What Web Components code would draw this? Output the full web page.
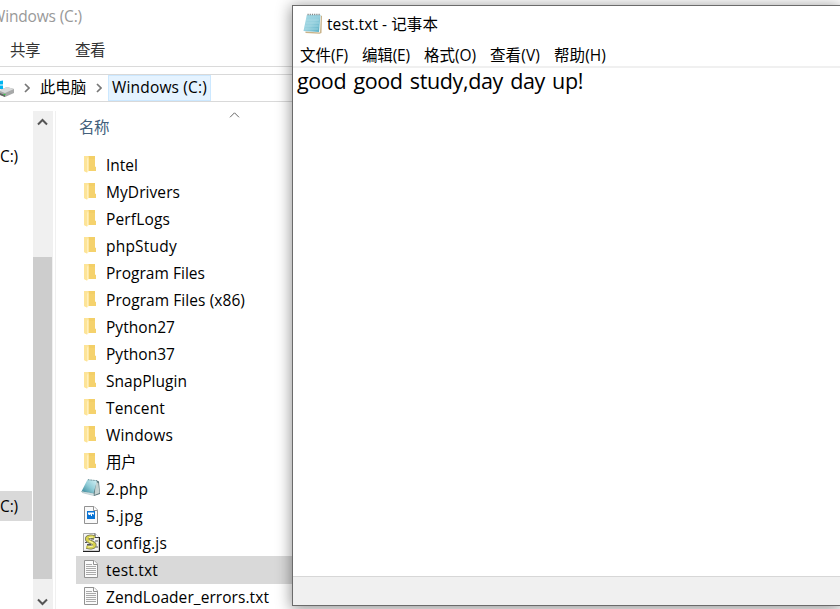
<!DOCTYPE html>
<html lang="zh-CN">
<head>
<meta charset="utf-8">
<title>test.txt - 记事本</title>
<style>
html,body{margin:0;width:840px;height:609px;overflow:hidden;background:#fff}
body{font:15.500px/20px "Open Sans","Noto Sans CJK SC",sans-serif;color:#000}
</style>
</head>
<body>
<desk-top></desk-top>
<script>
const define = (name, html, after) => customElements.define(name, class extends HTMLElement {
  connectedCallback() {
    if (this.shadowRoot) return;
    this.attachShadow({mode: 'open'}).innerHTML = html;
    if (after) after.call(this, this.shadowRoot);
  }
});

// A single line of text, spaced to occupy the width given in "w".
define('text-line', `<style>:host{display:block;white-space:pre;flex:none}span{display:inline-block}</style><span><slot></slot></span>`, function (root) {
  const span = root.querySelector('span'), w = +this.getAttribute('w');
  if (!w) return;
  const n = [...this.textContent].length;
  span.style.letterSpacing = ((w - span.getBoundingClientRect().width) / n) + 'px';
  this.style.width = w + 'px';
});

const icons = {
  folder: `<svg width="20" height="20" viewBox="-1 0 20 20"><path d="M6 2h7v10.500l1 .5v4H6z" fill="#f5d26d"/><path d="M6 2h7v3H6z" fill="#f2cb62" opacity=".5"/><path d="M2 2h4.500v15L5 18.500 2 17z" fill="#ffe9a6"/><path d="M2 2h4l-1 3v13.500L2 17z" fill="#fde498"/><path d="M5 5l1.500-2v14L5 18.500z" fill="#fff0bd"/></svg>`,
  php: `<svg width="20" height="20" viewBox="0 0 20 20"><defs><linearGradient id="p" x1="0" y1="1" x2="1" y2="0"><stop stop-color="#2f8295"/><stop offset=".5" stop-color="#8ecbd6"/><stop offset="1" stop-color="#d8f3f7"/></linearGradient></defs><path d="M15 2l3 1.500 1 12.500-6 2-1-4z" fill="#58757a"/><path d="M15 4l2.300 1L18.500 15l-5 2z" fill="#c5d2d1"/><path d="M6.500 1.500L16 2.500 12.500 15.500 0.500 13.500z" fill="url(#p)"/><path d="M.5 13.500l12 2 .5 2L1.500 14.700z" fill="#e5eef0" stroke="#71949b" stroke-width=".4"/><path d="M7 1.700l9 1" stroke="#658992" stroke-dasharray="1 .6"/></svg>`,
  jpg: `<svg width="20" height="20" viewBox="-1 0 20 20"><path d="M2.500 1.500h9.500l3.500 3.500v13.500h-13z" fill="#f9f9f9" stroke="#929292"/><path d="M11.500 1.500v4h4" fill="#fff" stroke="#929292"/><path d="M5 6h8v8H5z" fill="#0873d4"/><path d="M6 7.500h6v2h-1v-.5h-1v2H9V9.500H8v.5H7v-.5H6z" fill="#fff"/></svg>`,
  js: `<svg width="20" height="20" viewBox="-1 0 20 20"><path d="M1.500 1.500h11.500l4 4v13.500h-15.500z" fill="#f5f5f5" stroke="#aaa"/><path d="M1 19.500h16.500V5" fill="none" stroke="#202020"/><path d="M13 1.500v4h4" fill="#fff" stroke="#444"/><path d="M12.500 5.500C9 4 5 4.500 5 7c0 3 7.500 3 7.500 6 0 2.500-4 3-8 1.800" fill="none" stroke="#77775a" stroke-width="4.200"/><path d="M12.500 5.500C9 4 5 4.500 5 7c0 3 7.500 3 7.500 6 0 2.500-4 3-8 1.800" fill="none" stroke="#d8d24e" stroke-width="2.600"/><path d="M7 5.500l4-.5M7 9l4 2M6 15l5-1" stroke="#fbf9b3"/><path d="M13 9h3M14 15h2M3 10.500h2M9 7h3M5 12.500h4" stroke="#555"/></svg>`,
  txt: `<svg width="20" height="20" viewBox="-1 0 20 20"><path d="M2.500 1.500h9.500l3.500 3.500v13.500h-13z" fill="#fafafa" stroke="#929292"/><path d="M11.500 1.500v4h4" fill="#fff" stroke="#929292"/><path d="M4 5.500h6M4 7.500h10M4 9.500h10M4 11.500h10M4 13.500h10M4 15.500h10" stroke="#aaa"/></svg>`,
  notepad: `<svg width="22" height="24" viewBox="1 0 22 24"><defs><linearGradient id="n" x1="0" y1="0" x2="1" y2="1"><stop stop-color="#a3d9e5"/><stop offset=".5" stop-color="#96d0de"/><stop offset="1" stop-color="#56adc3"/></linearGradient></defs><path d="M19 3l2 1-.5 17-2 .8-14-.8v-2z" fill="#c9b389"/><path d="M6 2h14l-1 18.500-15-1z" fill="#f8faf9"/><path d="M5.800 3H19.500l-1.500 17-15.500-1z" fill="url(#n)"/><path d="M5 8h13M4.500 11H18M4 14h13.500M3.500 17H17" stroke="#b7e1e9" stroke-width=".6"/><path d="M6.500 2.500h13" stroke="#7d8789" stroke-width="1.500" stroke-dasharray="1.200 1"/></svg>`,
  drive: `<svg width="15" height="17" viewBox="0 0 15 17"><path d="M0 10l7-3 7 2v4l-9 4-5-2z" fill="#a7a9a9"/><path d="M0 10l7-3 7 2-9 4-5-2z" fill="#d8dada"/><path d="M0 13l5 2v2l-5-2z" fill="#666"/><path d="M3.500 14.500h2" stroke="#38c64b" stroke-width="1.300"/><path d="M0 1l3-.5V4.500H0zM0 5.500h3v3.500H0z" fill="#00b5f1"/></svg>`,
  right: `<svg width="6" height="10" viewBox="0 0 6 10"><path d="M1 1l4 4-4 4" fill="none" stroke="#777" stroke-width="1.700"/></svg>`,
  sort: `<svg width="11" height="6" viewBox="0 0 11 6"><path d="M1 5.300l4.500-4.500L10 5.300" fill="none" stroke="#666"/></svg>`,
  up: `<svg width="11" height="8" viewBox="0 0 11 8"><path d="M1 6.500l4.500-4.500L10 6.500" fill="none" stroke="#555" stroke-width="2"/></svg>`,
  down: `<svg width="11" height="8" viewBox="0 0 11 8"><path d="M1 1.500L5.500 6 10 1.500" fill="none" stroke="#555" stroke-width="2"/></svg>`
};
define('ui-icon', `<style>:host,svg{display:block;flex:none}</style><div></div>`, function (root) {
  root.querySelector('div').innerHTML = icons[this.getAttribute('name')];
});

define('file-row', `<style>
:host{display:flex;height:27px;padding-left:5px;gap:5px;align-items:center;box-sizing:border-box}
:host([selected]){background:#d9d9d9;box-shadow:0 1px #d9d9d9}
ui-icon{margin-top:-1px}text-line{margin-top:1px}
</style><div hidden></div>`, function (root) {
  const icon = document.createElement('ui-icon');
  icon.setAttribute('name', this.getAttribute('icon'));
  const line = document.createElement('text-line');
  line.textContent = this.getAttribute('name');
  line.setAttribute('w', this.getAttribute('w'));
  root.querySelector('div').replaceWith(icon, line);
});

define('file-list', `<style>
:host{display:block;flex:1;padding-left:20px;border-left:1px solid #f0f0f0}
header{height:40px;color:#43607c;display:flex;padding-left:3px}
header text-line{margin-top:6px}
header ui-icon{margin:1px 0 0 120px}
</style><header><text-line w="30">名称</text-line><ui-icon name="sort"></ui-icon></header><div></div>`, function (root) {
  root.querySelector('div').innerHTML = [
    ['folder','Intel',32],['folder','MyDrivers',74],['folder','PerfLogs',64],['folder','phpStudy',71],
    ['folder','Program Files',99],['folder','Program Files (x86)',139],['folder','Python27',69],['folder','Python37',69],
    ['folder','SnapPlugin',81],['folder','Tencent',59],['folder','Windows',67],['folder','用户',30],
    ['php','2.php',42],['jpg','5.jpg',37],['js','config.js',61],['txt','test.txt',52,1],['txt','ZendLoader_errors.txt',163]
  ].map(([i, n, w, s]) => `<file-row icon="${i}" name="${n}" w="${w}"${s ? ' selected' : ''}></file-row>`).join('');
});

define('scroll-bar', `<style>
:host{display:flex;flex-direction:column;width:20px;background:#f0f0f0;flex:none;height:498px}
.b{height:30px;display:flex;justify-content:center;padding-right:1px;box-sizing:border-box;flex:none}
.up{height:146px;padding-top:7px}.thumb{height:322px;flex:none;width:19px;background:#cdcdcd}.dn{padding-top:19px}
</style><div class="b up"><ui-icon name="up"></ui-icon></div><div class="thumb"></div><div class="b dn"><ui-icon name="down"></ui-icon></div>`);

define('nav-tree', `<style>
:host{display:block;width:33px;flex:none;overflow:hidden}
div{height:30px;width:32px;display:flex;align-items:center;box-sizing:border-box}
.a{margin-top:30px}.s{margin-top:320px;background:#d9d9d9}
</style><div class="a"><text-line w="18">C:)</text-line></div><div class="s"><text-line w="18">C:)</text-line></div>`);

define('explorer-window', `<style>
:host{display:block;height:609px;overflow:hidden}
.title{height:33px;color:#999;padding:6px 0 0;box-sizing:border-box}
.title text-line{margin-left:-9px}
.tabs{height:34px;box-sizing:border-box;border-bottom:1px solid #dadada;display:flex;gap:35px;padding:7px 0 0 10px;color:#333}
.addr{height:28px;box-sizing:border-box;margin-top:7px;border:solid #d9d9d9;border-width:1px 0;display:flex;align-items:center}
.addr .r1{margin:0 10px 0 9px}.addr .r2{margin:0 6px 0 10px}
.addr>text-line{margin-top:-2px}
.crumb{align-self:stretch;width:103px;box-sizing:border-box;border:1px solid #cce8ff;background:#e5f3ff;padding:1px 0 0 3px}
.main{display:flex;height:498px;margin-top:9px}
file-list{margin-left:2px}
</style>
<div class="title"><text-line w="91">Windows (C:)</text-line></div>
<div class="tabs"><text-line w="30">共享</text-line><text-line w="30">查看</text-line></div>
<div class="addr"><ui-icon name="drive"></ui-icon><ui-icon class="r1" name="right"></ui-icon><text-line w="46">此电脑</text-line><ui-icon class="r2" name="right"></ui-icon><div class="crumb"><text-line w="95">Windows (C:)</text-line></div></div>
<div class="main"><nav-tree></nav-tree><scroll-bar></scroll-bar><file-list></file-list></div>`);

define('notepad-window', `<style>
:host{display:flex;flex-direction:column;box-sizing:border-box;border:1px solid #6b6b6b;border-right:0;background:#fff;box-shadow:0 2px 14px 1px rgba(0,0,0,.42)}
.title{height:36px;display:flex;align-items:center;padding-left:9px;gap:3px;margin-bottom:1px}
.menu text-line{margin-top:1px}
.menu{height:25px;box-sizing:border-box;border-bottom:2px solid #f0f0f0;display:flex;align-items:center;gap:14px;padding-left:7px}
.body{flex:1;font-size:21.500px;line-height:25px;padding-left:4px;word-spacing:2px}
.status{height:28px;background:#f0f0f0;border-top:1px solid #d7d7d7}
</style>
<div class="title"><ui-icon name="notepad"></ui-icon><text-line w="111">test.txt - 记事本</text-line></div>
<div class="menu"><text-line w="48">文件(F)</text-line><text-line w="48">编辑(E)</text-line><text-line w="52">格式(O)</text-line><text-line w="50">查看(V)</text-line><text-line w="52">帮助(H)</text-line></div>
<div class="body"><text-line w="286">good good study,day day up!</text-line></div>
<div class="status"></div>`);

define('desk-top', `<style>
:host{display:block;position:relative;width:840px;height:609px;overflow:hidden}
notepad-window{position:absolute;left:292px;top:5px;width:548px;height:601px}
</style><explorer-window></explorer-window><notepad-window></notepad-window>`);
</script>
</body>
</html>
